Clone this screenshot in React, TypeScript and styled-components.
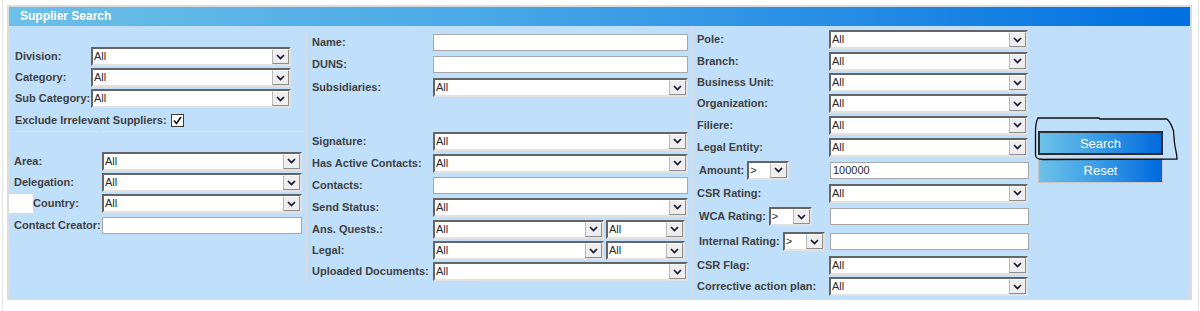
import React from 'react';
import styled, { createGlobalStyle } from 'styled-components';

const GlobalStyle = createGlobalStyle`
  html, body {
    margin: 0;
    padding: 0;
    background: #fff;
  }
  body {
    font-family: "Liberation Sans", Arial, sans-serif;
  }
  * {
    box-sizing: border-box;
  }
`;

type SelectProps = {
  value?: string;
  width: number;
};

const Chevron = () => (
  <svg width="9" height="6" viewBox="0 0 9 6">
    <polyline points="1,1 4.5,4.5 8,1" fill="none" stroke="#141431" strokeWidth="1.7" />
  </svg>
);

const Select: React.FC<SelectProps> = ({ value = 'All', width }) => (
  <SelectBox $width={width}>
    <SelectValue>{value}</SelectValue>
    <ArrowBox>
      <Chevron />
    </ArrowBox>
  </SelectBox>
);

type RowData = {
  label: string;
  h: number;
};

const leftTop: RowData[] = [
  { label: 'Division:', h: 21 },
  { label: 'Category:', h: 21 },
  { label: 'Sub Category:', h: 21 },
];

const rightTop: RowData[] = [
  { label: 'Pole:', h: 21 },
  { label: 'Branch:', h: 22 },
  { label: 'Business Unit:', h: 21 },
  { label: 'Organization:', h: 21 },
  { label: 'Filiere:', h: 22 },
  { label: 'Legal Entity:', h: 22 },
];

const App: React.FC = () => {
  return (
    <>
      <GlobalStyle />
      <Frame>
        <Panel>
          <Header>Supplier Search</Header>
          <Body>
            <LeftCol>
              {leftTop.map((r) => (
                <Row key={r.label} $h={r.h}>
                  <Label $w={77} $indent={1}>{r.label}</Label>
                  <Select width={200} />
                </Row>
              ))}
              <Row $h={22}>
                <Label $indent={1}>Exclude Irrelevant Suppliers:</Label>
                <CheckBox>
                  <svg width="11" height="11" viewBox="0 0 11 11">
                    <polyline points="2,5.5 4.5,8.5 9,2" fill="none" stroke="#111" strokeWidth="1.6" />
                  </svg>
                </CheckBox>
              </Row>
              <Separator>
                <span />
                <span />
              </Separator>
              <LowerGroup>
                <Row $h={22}>
                  <Label $w={88}>Area:</Label>
                  <Select width={200} />
                </Row>
                <Row $h={21}>
                  <Label $w={88}>Delegation:</Label>
                  <Select width={200} />
                </Row>
                <Row $h={21}>
                  <Label $w={88}>
                    <WhiteMark />
                    Country:
                  </Label>
                  <Select width={200} />
                </Row>
                <Row $h={22}>
                  <Label $w={88}>Contact Creator:</Label>
                  <TextInput $width={200} />
                </Row>
              </LowerGroup>
            </LeftCol>

            <MiddleCol>
              <Row $h={21}>
                <Label $w={121}>Name:</Label>
                <TextInput $width={255} />
              </Row>
              <Row $h={23}>
                <Label $w={121}>DUNS:</Label>
                <TextInput $width={255} />
              </Row>
              <Row $h={23}>
                <Label $w={121}>Subsidiaries:</Label>
                <Select width={255} />
              </Row>
              <Spacer $h={31} />
              <Row $h={22}>
                <Label $w={121}>Signature:</Label>
                <Select width={255} />
              </Row>
              <Row $h={22}>
                <Label $w={121}>Has Active Contacts:</Label>
                <Select width={255} />
              </Row>
              <Row $h={22}>
                <Label $w={121}>Contacts:</Label>
                <TextInput $width={255} />
              </Row>
              <Row $h={22}>
                <Label $w={121}>Send Status:</Label>
                <Select width={255} />
              </Row>
              <Row $h={22}>
                <Label $w={121}>Ans. Quests.:</Label>
                <Select width={171} />
                <Gap $w={2} />
                <Select width={79} />
              </Row>
              <Row $h={21}>
                <Label $w={121}>Legal:</Label>
                <Select width={171} />
                <Gap $w={2} />
                <Select width={79} />
              </Row>
              <Row $h={21}>
                <Label $w={121}>Uploaded Documents:</Label>
                <Select width={255} />
              </Row>
            </MiddleCol>

            <RightCol>
              {rightTop.map((r) => (
                <Row key={r.label} $h={r.h}>
                  <Label $w={132}>{r.label}</Label>
                  <Select width={199} />
                </Row>
              ))}
              <Row $h={24}>
                <Compare $w={132}>
                  <Label $indent={2}>Amount:</Label>
                  <Select width={42} value=">" />
                </Compare>
                <TextInput $width={199} $shift={1} value="100000" readOnly />
              </Row>
              <Row $h={22}>
                <Label $w={132}>CSR Rating:</Label>
                <Select width={199} />
              </Row>
              <Row $h={25}>
                <Compare $w={132}>
                  <Label $indent={2}>WCA Rating:</Label>
                  <Select width={43} value=">" />
                </Compare>
                <TextInput $width={199} $shift={1} />
              </Row>
              <Row $h={25}>
                <Compare $w={132}>
                  <Label $indent={2}>Internal Rating:</Label>
                  <Select width={42} value=">" />
                </Compare>
                <TextInput $width={199} $shift={1} />
              </Row>
              <Row $h={22}>
                <Label $w={132}>CSR Flag:</Label>
                <Select width={199} />
              </Row>
              <Row $h={21}>
                <Label $w={132}>Corrective action plan:</Label>
                <Select width={199} />
              </Row>
            </RightCol>

            <ButtonCol>
              <Button $variant="primary">Search</Button>
              <Button $variant="secondary">Reset</Button>
            </ButtonCol>
          </Body>

          <Scribble viewBox="1025 110 160 55" width="160" height="55">
            <path
              d="M1036,116 L1097,116 L1098,117 L1165,117 C1168,120 1170,124 1171.5,129 L1172.5,141 C1173.5,148 1175,152 1175,157 L1041,157.5 C1036,157.5 1033.5,156 1033.5,153 L1033.5,129 C1033.5,123 1034.5,119 1036,116 Z"
              fill="none"
              stroke="#111"
              strokeWidth="1.3"
            />
          </Scribble>
        </Panel>
      </Frame>
    </>
  );
};
export default App;

const Frame = styled.div`
  margin-left: 2px;
  width: 1197px;
  height: 311px;
  border-left: 1px solid #e3e3e3;
  border-right: 1px solid #e3e3e3;
  padding: 5px 6px 0 4px;
`;

const Panel = styled.section`
  position: relative;
  border: 2px solid #dcdcdc;
  border-bottom-width: 1px;
`;

const Header = styled.h2`
  margin: 0;
  height: 19px;
  padding-left: 11px;
  background: linear-gradient(to right, #6dc0e6 0%, #4aa8e6 40%, #2a8fe4 68%, #0070e0 100%);
  color: #fff;
  font: bold 12px/19px "Liberation Sans", Arial, sans-serif;
`;

const Body = styled.div`
  display: flex;
  align-items: flex-start;
  height: 273px;
  background: #bfdffb;
`;

const LeftCol = styled.div`
  width: 298px;
  height: 248px;
  margin-top: 7px;
  padding: 13px 0 0 5px;
  border-right: 1px solid #d9dde1;
`;

const MiddleCol = styled.div`
  width: 386px;
  height: 272px;
  padding: 6px 0 0 5px;
  border-right: 1px solid #d9dde1;
`;

const RightCol = styled.div`
  width: 337px;
  padding: 3px 0 0 4px;
`;

const ButtonCol = styled.div`
  display: flex;
  flex-direction: column;
  gap: 3px;
  padding: 105px 0 0 8px;
`;

const LowerGroup = styled.div`
  margin-top: 18px;
`;

const Row = styled.div<{ $h: number }>`
  display: flex;
  align-items: center;
  height: ${(p) => p.$h}px;
`;

const Spacer = styled.div<{ $h: number }>`
  height: ${(p) => p.$h}px;
`;

const Gap = styled.span<{ $w: number }>`
  width: ${(p) => p.$w}px;
  flex: none;
`;

const Label = styled.span<{ $w?: number; $indent?: number }>`
  display: flex;
  align-items: center;
  flex: none;
  width: ${(p) => (p.$w ? `${p.$w}px` : 'auto')};
  padding-left: ${(p) => p.$indent ?? 0}px;
  margin-right: ${(p) => (p.$w ? 0 : 3)}px;
  font: bold 11px/13px "Liberation Sans", Arial, sans-serif;
  color: #3f3f3f;
  white-space: nowrap;
`;

const Compare = styled.div<{ $w: number }>`
  display: flex;
  align-items: center;
  width: ${(p) => p.$w}px;
  flex: none;
`;

const WhiteMark = styled.span`
  display: inline-block;
  width: 24px;
  height: 19px;
  margin-left: -5px;
  background: #fff;
`;

const SelectBox = styled.div<{ $width: number }>`
  display: flex;
  align-items: stretch;
  flex: none;
  width: ${(p) => p.$width}px;
  height: 19px;
  background: #fff;
  border-top: 2px solid #656565;
  border-left: 2px solid #656565;
  border-right: 2px solid #e2e2e2;
  border-bottom: 2px solid #e2e2e2;
`;

const SelectValue = styled.span`
  flex: 1;
  padding-left: 1px;
  font: 11px/15px "Liberation Sans", Arial, sans-serif;
  color: #2a2a2a;
  overflow: hidden;
  white-space: nowrap;
`;

const ArrowBox = styled.span`
  display: flex;
  align-items: center;
  justify-content: center;
  width: 17px;
  flex: none;
  background: #eeeeee;
  border: 1px solid;
  border-color: #fafafa #8e8e8e #8e8e8e #b9b9b9;
`;

const TextInput = styled.input<{ $width: number; $shift?: number }>`
  flex: none;
  width: ${(p) => p.$width}px;
  height: 17px;
  margin: 0 0 0 ${(p) => p.$shift ?? 0}px;
  padding: 0 2px;
  border: 1px solid #a8a8a8;
  background: #fff;
  font: 11px "Liberation Sans", Arial, sans-serif;
  color: #2a2a2a;
  outline: none;
`;

const CheckBox = styled.span`
  display: flex;
  align-items: center;
  justify-content: center;
  width: 13px;
  height: 13px;
  margin-left: 1px;
  border: 1px solid #3c3c3c;
  background: #fff;
`;

const Separator = styled.div`
  display: flex;
  gap: 4px;
  margin-left: -4px;

  span {
    height: 1px;
    background: #dde1e5;
  }
  span:first-child {
    width: 88px;
  }
  span:last-child {
    width: 201px;
  }
`;

const Button = styled.button<{ $variant: 'primary' | 'secondary' }>`
  width: 125px;
  height: ${(p) => (p.$variant === 'primary' ? 24 : 25)}px;
  padding: 0;
  border: ${(p) => (p.$variant === 'primary' ? '2px solid #2e2e2e' : '1px solid #c4c4c4')};
  background: linear-gradient(to right, #6ec2e9 0%, #3d9fe6 45%, #0069de 100%);
  color: #fff;
  font: 13px "Liberation Sans", Arial, sans-serif;
  cursor: pointer;
`;

const Scribble = styled.svg`
  position: absolute;
  left: 1018px;
  top: 105px;
  pointer-events: none;
  overflow: visible;
`;
